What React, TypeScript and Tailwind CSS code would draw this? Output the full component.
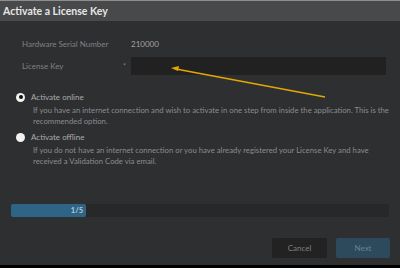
import React from "react";

export default function App() {
  return (
    <div className="relative w-[400px] h-[268px] overflow-hidden bg-[#2e2f31] flex flex-col" style={{ fontFamily: "Lato, 'Noto Sans', sans-serif" }}>
      <div className="h-[21px] border-t border-[#8e8e8e] bg-[#48494b] flex items-center pl-[3px] shrink-0">
        <span className="text-[10.5px] font-bold text-[#e6e6e6] leading-none">Activate a License Key</span>
      </div>
      <div className="flex-1 flex flex-col">
        <div className="flex items-center h-[10px] mt-[18px] text-[8px]">
          <span className="ml-[22px] w-[109px] text-[#808184]">Hardware Serial Number</span>
          <span className="text-[#a3a3a3]">210000</span>
        </div>
        <div className="flex items-center mt-[8px] h-[18px] text-[8px]">
          <span className="ml-[22px] w-[101px] text-[#808184]">License Key</span>
          <span className="w-[8px] text-[#808184] text-[7px]">*</span>
          <div className="w-[255px] h-[18px] bg-[#212121]"></div>
        </div>
        <div className="flex items-center mt-[16px] h-[12px]">
          <div className="ml-[16px] w-[9px] h-[9px] rounded-full bg-[#f2f2f2] flex items-center justify-center">
            <div className="w-[4px] h-[4px] rounded-full bg-[#111]"></div>
          </div>
          <span className="ml-[6px] text-[8px] text-[#ababab]">Activate online</span>
        </div>
        <div className="ml-[33px] mr-[6px] mt-[2px] text-[7.75px] leading-[11px] text-[#8b8c8e]">
          If you have an internet connection and wish to activate in one step from inside the application. This is the recommended option.
        </div>
        <div className="flex items-center mt-[4px] h-[12px]">
          <div className="ml-[16px] w-[9px] h-[9px] rounded-full bg-[#f2f2f2]"></div>
          <span className="ml-[6px] text-[8px] text-[#ababab]">Activate offline</span>
        </div>
        <div className="ml-[33px] mr-[20px] mt-[2px] text-[7.75px] leading-[11px] text-[#8b8c8e]">
          If you do not have an internet connection or you have already registered your License Key and have received a Validation Code via email.
        </div>
        <div className="ml-[11px] mr-[11px] mt-[37px] h-[13px] bg-[#27282a] rounded-[2px] flex">
          <div className="w-[75px] h-full bg-[#2e6587] rounded-[2px] flex items-center justify-end pr-[3px]">
            <span className="text-[7.5px] font-bold text-[#b9c9d4]">1/5</span>
          </div>
        </div>
        <div className="flex justify-end gap-[9px] mr-[10px] mt-[21px]">
          <div className="w-[55px] h-[20px] bg-[#222222] rounded-[2px] flex items-center justify-center text-[8px] text-[#808080]">Cancel</div>
          <div className="w-[54px] h-[20px] bg-[#2d4a5d] rounded-[2px] flex items-center justify-center text-[8px] text-[#6b7f8c]">Next</div>
        </div>
      </div>
      <div className="h-[3px] bg-black shrink-0"></div>
      <svg className="absolute left-0 top-0" width="400" height="268">
        <line x1="325" y1="97" x2="176" y2="69" stroke="#e3a900" strokeWidth="1.4" />
        <polygon points="171,68 179,66 178,71" fill="#e3a900" />
      </svg>
    </div>
  );
}
